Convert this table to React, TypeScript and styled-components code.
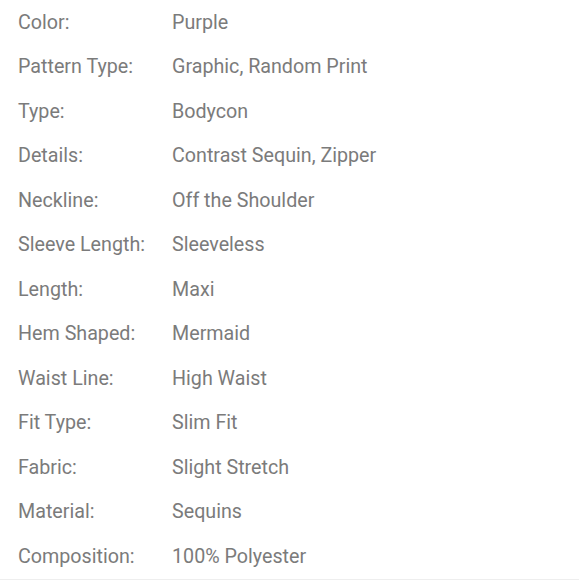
import styled, { createGlobalStyle } from 'styled-components';

const GlobalStyle = createGlobalStyle`
  body {
    margin: 0;
    background: #fff;
    font-family: Roboto, 'Liberation Sans', sans-serif;
  }
`;

const specs: [string, string][] = [
  ['Color:', 'Purple'],
  ['Pattern Type:', 'Graphic, Random Print'],
  ['Type:', 'Bodycon'],
  ['Details:', 'Contrast Sequin, Zipper'],
  ['Neckline:', 'Off the Shoulder'],
  ['Sleeve Length:', 'Sleeveless'],
  ['Length:', 'Maxi'],
  ['Hem Shaped:', 'Mermaid'],
  ['Waist Line:', 'High Waist'],
  ['Fit Type:', 'Slim Fit'],
  ['Fabric:', 'Slight Stretch'],
  ['Material:', 'Sequins'],
  ['Composition:', '100% Polyester'],
];

const App = () => {
  return (
    <>
      <GlobalStyle />
      <SpecList>
        {specs.map(([label, value]) => (
          <SpecRow key={label}>
            <Label>{label}</Label>
            <Value>{value}</Value>
          </SpecRow>
        ))}
      </SpecList>
    </>
  );
};

export default App;

const SpecList = styled.div`
  width: 579px;
  border-bottom: 1px solid #eeeeee;
`;

const SpecRow = styled.div`
  display: flex;
  align-items: center;
  height: 44.5px;
  padding: 0 0 0 18px;
  box-sizing: border-box;
  font-size: 19.7px;
  color: #7b7b7b;
`;

const Label = styled.span`
  width: 154px;
  flex-shrink: 0;
`;

const Value = styled.span`
  flex: 1;
`;
